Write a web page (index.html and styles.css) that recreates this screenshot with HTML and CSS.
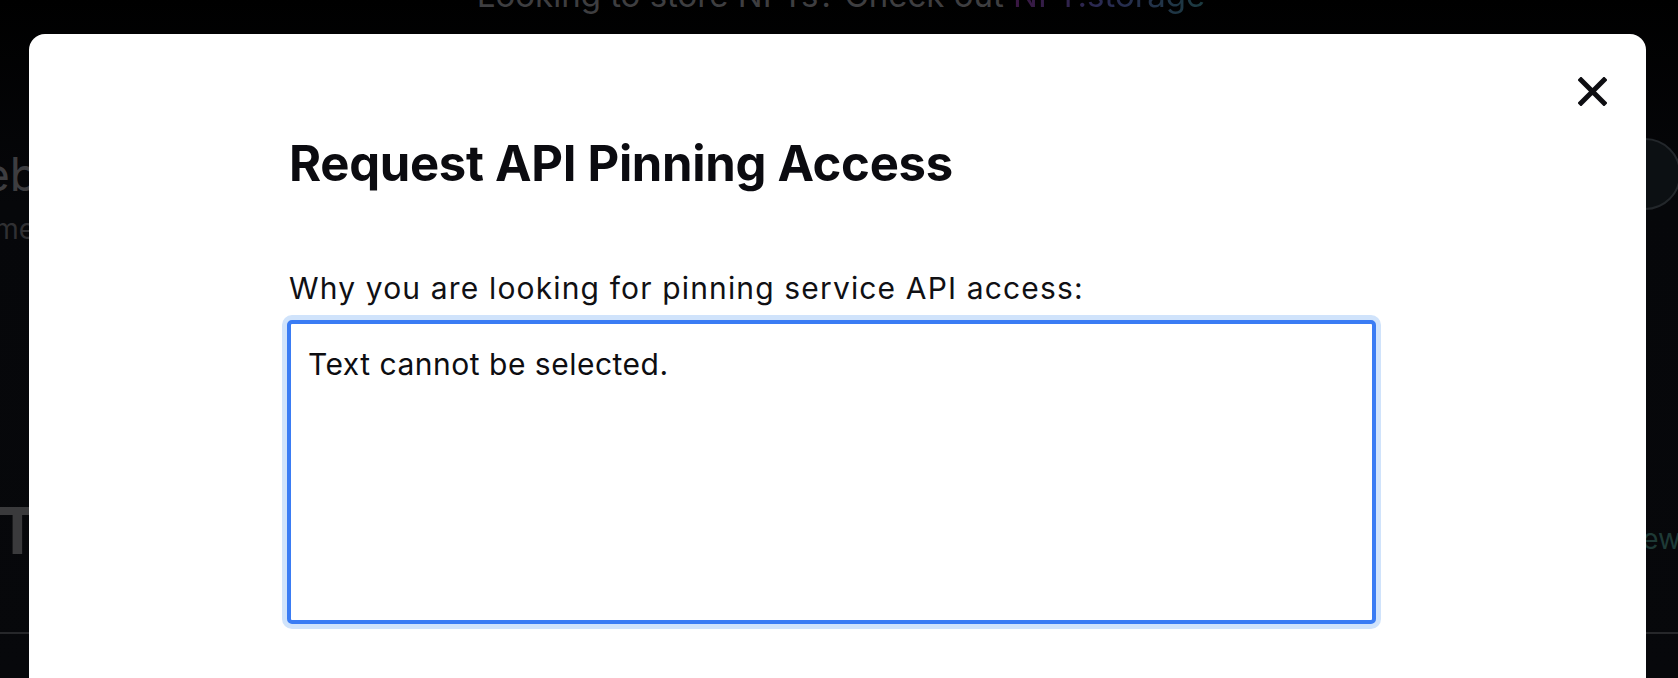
FILE: index.html
```html
<!DOCTYPE html>
<html lang="en">
<head>
<meta charset="utf-8">
<title>Request API Pinning Access</title>
<link rel="stylesheet" href="styles.css">
</head>
<body>
<div class="page">
  <div class="banner">Looking to store NFTs? Check out <span class="grad">NFT.storage</span></div>
  <div class="hero">
    <div class="hero-left">
      <div class="hero-title">The Web</div>
      <div class="hero-sub">welcome</div>
    </div>
    <div class="hero-right"><div class="pill"></div></div>
  </div>
  <div class="section">
    <div class="sec-title">Tools</div>
    <div class="sec-link">new</div>
  </div>
  <div class="rule"></div>
</div>

<div class="modal" role="dialog" aria-labelledby="modal-title">
  <button class="close" aria-label="Close">
    <svg width="29" height="29" viewBox="0 0 29 29" aria-hidden="true">
      <path d="M3 3 L26 26 M26 3 L3 26" stroke="#0e0e12" stroke-width="5" stroke-linecap="square" fill="none"/>
    </svg>
  </button>
  <h1 id="modal-title" class="title">Request API Pinning Access</h1>
  <label class="label" for="reason">Why you are looking for pinning service API access:</label>
  <textarea id="reason" class="field">Text cannot be selected.</textarea>
</div>
</body>
</html>
```

FILE: styles.css
```css
* { box-sizing: border-box; }

html, body {
  margin: 0;
  padding: 0;
  height: 100%;
  overflow: hidden;
}

body {
  background: linear-gradient(180deg, #000000 0%, #06070a 30%, #07080b 100%);
  font-family: Inter, "Noto Sans", sans-serif;
}

/* ---------- dimmed page behind the dialog ---------- */
.page {
  color: #3b3b3d;
}

.banner {
  margin-top: -24px;
  text-align: center;
  font-size: 33px;
  line-height: 38px;
  color: #3e3e40;
  padding-left: 4px;
}

.grad {
  background: linear-gradient(90deg, #3a1642 0%, #2a2a52 45%, #1b3b40 100%);
  -webkit-background-clip: text;
  background-clip: text;
  color: transparent;
}

.hero {
  display: flex;
  justify-content: space-between;
  align-items: flex-start;
  margin-top: 124px;
}

.hero-left {
  width: 38px;
  display: flex;
  flex-direction: column;
  align-items: flex-end;
}

.hero-title {
  white-space: nowrap;
  font-size: 46px;
  line-height: 52px;
  color: #3d3d40;
  margin-top: 10px;
}

.hero-sub {
  white-space: nowrap;
  font-size: 28px;
  line-height: 34px;
  color: #303033;
  margin-top: 12px;
  margin-right: 3px;
}

.hero-right {
  margin-right: -3px;
}

.pill {
  width: 180px;
  height: 72px;
  border: 2px solid #23272b;
  border-radius: 36px;
  background: #0c1013;
}

.section {
  display: flex;
  justify-content: space-between;
  align-items: flex-end;
  margin-top: 250px;
}

.sec-title {
  font-size: 64px;
  line-height: 70px;
  font-weight: 700;
  color: #3a3a3c;
  margin-left: -4px;
}

.sec-link {
  font-size: 28px;
  line-height: 34px;
  color: #1e3a36;
  margin-right: -3px;
  margin-bottom: 10px;
}

.rule {
  margin-top: 66px;
  height: 2px;
  background: #26272a;
}

/* ---------- dialog ---------- */
.modal {
  position: absolute;
  top: 34px;
  left: 29px;
  width: 1617px;
  height: 720px;
  background: #ffffff;
  border-radius: 16px;
  padding: 100px 0 0 258px;
  color: #0d0d11;
}

.close {
  position: absolute;
  top: 43px;
  right: 39px;
  width: 29px;
  height: 29px;
  padding: 0;
  border: 0;
  background: transparent;
  display: block;
  cursor: pointer;
}

.close svg { display: block; }

.title {
  margin: 0;
  padding-left: 2px;
  font-size: 49px;
  line-height: 59px;
  font-weight: 700;
  letter-spacing: -0.3px;
  color: #0b0b10;
}

.label {
  display: block;
  margin-top: 77px;
  font-size: 30px;
  line-height: 36px;
  color: #101014;
  letter-spacing: 1.15px;
  padding-left: 2px;
}

.field {
  display: block;
  margin-top: 14px;
  width: 1089px;
  height: 304px;
  border: 4px solid #3a7cf4;
  border-radius: 5px;
  box-shadow: 0 0 0 5px #d0e3fb;
  outline: none;
  resize: none;
  padding: 22px 17px;
  font-family: Inter, "Noto Sans", sans-serif;
  font-size: 30px;
  line-height: 36px;
  letter-spacing: 0.5px;
  color: #0d0d11;
  background: #ffffff;
}
```
